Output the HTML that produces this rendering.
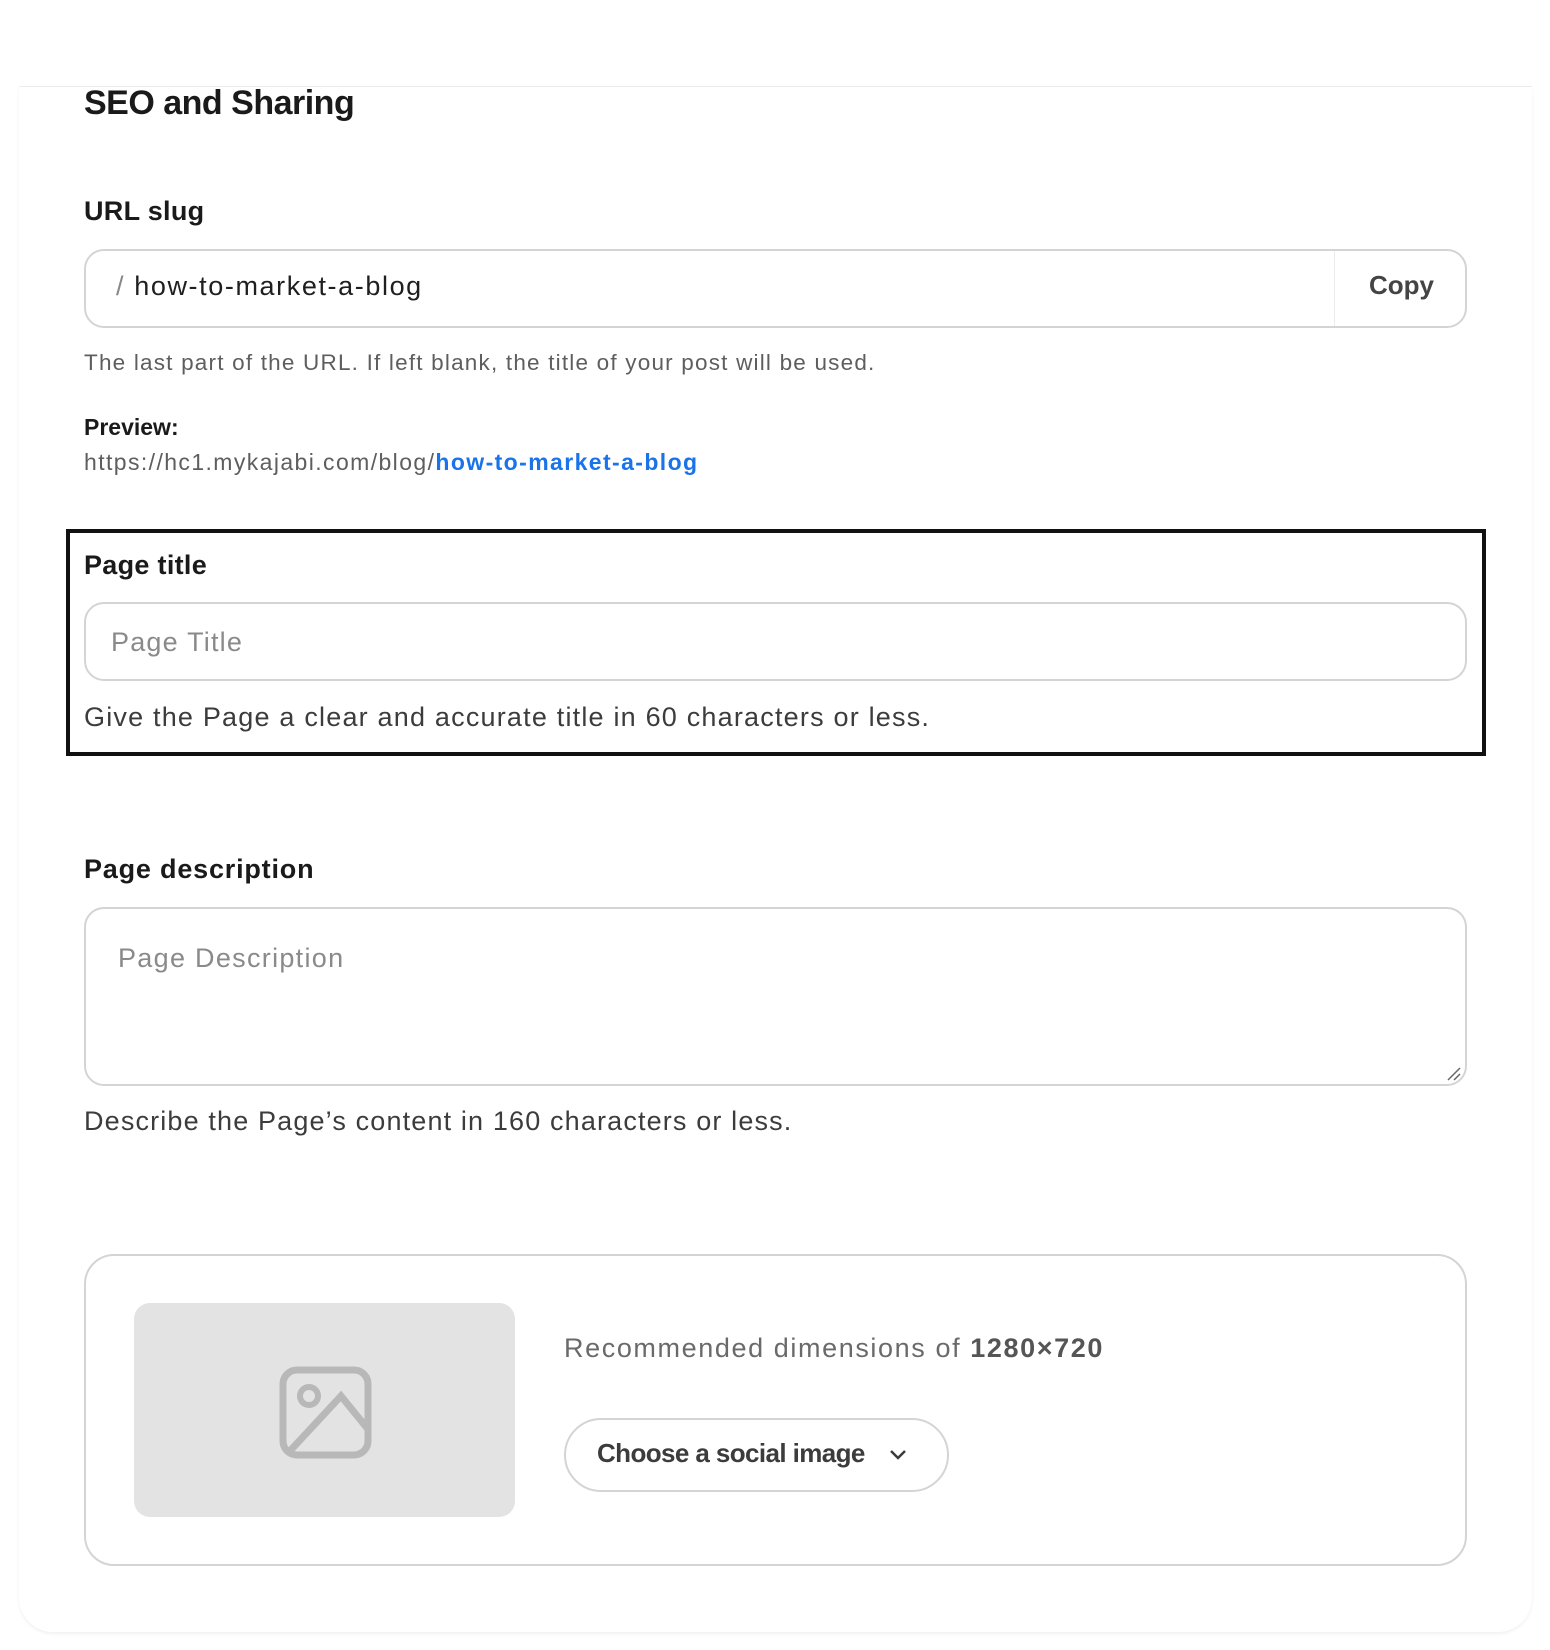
<!DOCTYPE html>
<html><head><meta charset="utf-8"><style>
*{box-sizing:border-box;margin:0;padding:0}
body{width:1550px;height:1650px;background:#fff;font-family:"Liberation Sans",sans-serif;color:#1f1f1f;position:relative;overflow:hidden}
.abs{position:absolute;white-space:nowrap}
.card{position:absolute;left:19px;top:86px;width:1513px;height:1546px;border-top:1px solid #ececec;border-radius:0 0 34px 34px;box-shadow:0 2px 3px rgba(0,0,0,0.06)}
.lbl{font-weight:bold;font-size:27px;color:#1a1a1a;letter-spacing:0.3px}
.inp{position:absolute;border:2px solid #d4d4d4;border-radius:20px;background:#fff}
.help{color:#5e5e5e;font-size:22.5px;letter-spacing:1.2px}
</style></head><body>
<div class="card"></div>
<div class="abs" style="left:84px;top:84px;font-size:34px;font-weight:bold;letter-spacing:-0.5px;color:#1a1a1a">SEO and Sharing</div>

<div class="abs lbl" style="left:84px;top:196px">URL slug</div>
<div class="inp" style="left:84px;top:249px;width:1383px;height:79px"></div>
<div class="abs" style="left:1334px;top:251px;width:1px;height:75px;background:#ececec"></div>
<div class="abs" style="left:116px;top:271px;font-size:27px;color:#1f1f1f;letter-spacing:1.6px"><span style="color:#888">/</span> how-to-market-a-blog</div>
<div class="abs" style="left:1369px;top:270px;font-size:26px;font-weight:bold;color:#444">Copy</div>
<div class="abs help" style="left:84px;top:350px">The last part of the URL. If left blank, the title of your post will be used.</div>
<div class="abs" style="left:84px;top:414px;font-size:23px;font-weight:bold;color:#1a1a1a">Preview:</div>
<div class="abs" style="left:84px;top:449px;font-size:23px;color:#5e5e5e;letter-spacing:1.4px">https://hc1.mykajabi.com/blog/<span style="color:#1a73e8;font-weight:bold">how-to-market-a-blog</span></div>

<div class="abs" style="left:66px;top:529px;width:1420px;height:227px;border:4px solid #111"></div>
<div class="abs lbl" style="left:84px;top:550px">Page title</div>
<div class="inp" style="left:84px;top:602px;width:1383px;height:79px"></div>
<div class="abs" style="left:111px;top:627px;font-size:27px;color:#8a8a8a;letter-spacing:1.2px">Page Title</div>
<div class="abs" style="left:84px;top:702px;font-size:27px;color:#3c3c3c;letter-spacing:1.2px">Give the Page a clear and accurate title in 60 characters or less.</div>

<div class="abs lbl" style="left:84px;top:854px;letter-spacing:0.8px">Page description</div>
<div class="inp" style="left:84px;top:907px;width:1383px;height:179px"></div>
<div class="abs" style="left:118px;top:943px;font-size:27px;color:#8a8a8a;letter-spacing:1.3px">Page Description</div>
<svg class="abs" style="left:1446px;top:1066px" width="16" height="16"><path d="M2 14L14 2M8 14L14 8" stroke="#666" stroke-width="1.5"/></svg>
<div class="abs" style="left:84px;top:1106px;font-size:27px;color:#3c3c3c;letter-spacing:1.15px">Describe the Page’s content in 160 characters or less.</div>

<div class="inp" style="left:84px;top:1254px;width:1383px;height:312px;border-radius:30px"></div>
<div class="abs" style="left:134px;top:1303px;width:381px;height:214px;background:#e3e3e3;border-radius:16px"></div>
<svg class="abs" style="left:279px;top:1366px" width="93" height="93" viewBox="0 0 93 93"><rect x="4" y="4" width="85" height="85" rx="14" fill="none" stroke="#b8b8b8" stroke-width="7"/><circle cx="30" cy="30" r="9" fill="none" stroke="#b8b8b8" stroke-width="6"/><path d="M10 86L62 30L88 62" fill="none" stroke="#b8b8b8" stroke-width="7"/></svg>
<div class="abs" style="left:564px;top:1333px;font-size:27px;color:#6a6a6a;letter-spacing:1.6px">Recommended dimensions of <b style="color:#555">1280×720</b></div>
<div class="inp" style="left:564px;top:1418px;width:385px;height:74px;border-radius:37px"></div>
<div class="abs" style="left:597px;top:1438px;font-size:26px;font-weight:bold;color:#3c3c3c;letter-spacing:-0.6px">Choose a social image</div>
<svg class="abs" style="left:888px;top:1447px" width="20" height="16"><path d="M3 4L10 11L17 4" fill="none" stroke="#3c3c3c" stroke-width="2.5"/></svg>
</body></html>
